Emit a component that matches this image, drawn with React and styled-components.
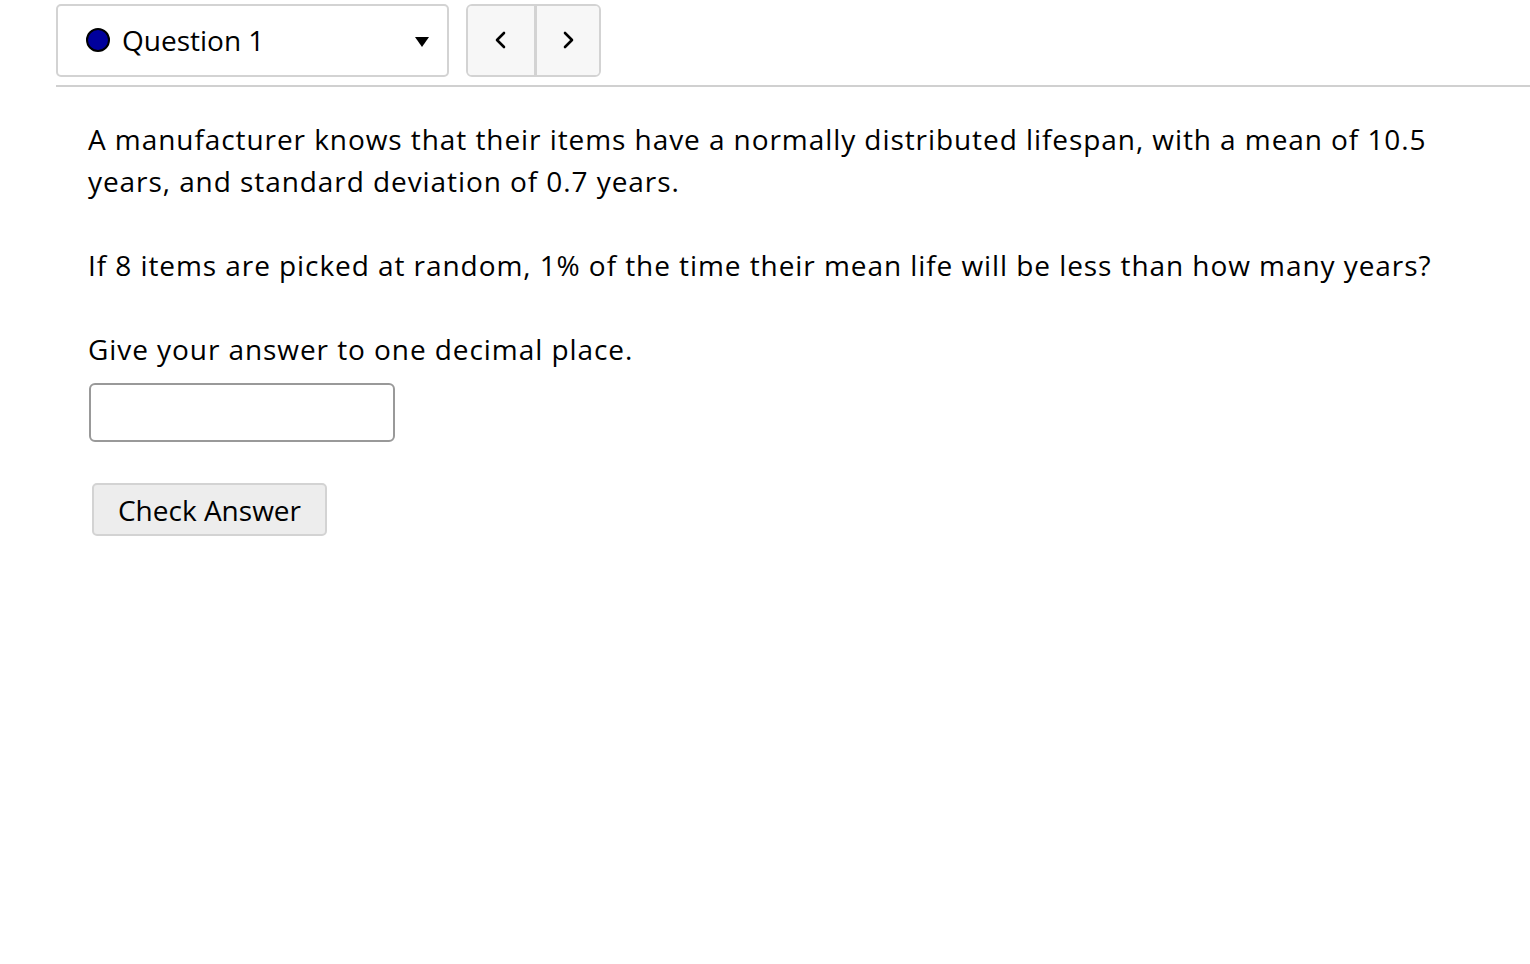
import React from "react";
import styled, { createGlobalStyle } from "styled-components";

const Global = createGlobalStyle`
  html, body { margin: 0; padding: 0; background: #fff; }
  body { font-family: "Open Sans", "Noto Sans", sans-serif; color: #000; }
`;

const Page = styled.div`
  padding: 4px 0 0 56px;
`;

const Toolbar = styled.div`
  display: flex;
  align-items: center;
  gap: 17px;
  padding-bottom: 8px;
  border-bottom: 2px solid #d0d0d0;
`;

const Select = styled.div`
  box-sizing: border-box;
  width: 393px;
  height: 73px;
  border: 2px solid #d3d3d3;
  border-radius: 5px;
  display: flex;
  align-items: center;
  padding: 0 18px 2px 28px;
  gap: 12px;
  font-size: 28px;
  background: #fff;
`;

const Dot = styled.span`
  width: 20px;
  height: 20px;
  border-radius: 50%;
  background: #00009c;
  border: 2px solid #000;
  flex: none;
`;

const Label = styled.span`
  flex: 1;
  line-height: 1;
`;

const Caret = styled.svg`
  width: 14px;
  height: 10px;
  margin-top: 4px;
`;

const Nav = styled.div`
  box-sizing: border-box;
  display: flex;
  height: 73px;
  border: 2px solid #d3d3d3;
  border-radius: 6px;
  overflow: hidden;
  background: #f7f7f7;
`;

const NavButton = styled.button`
  width: ${p => p.$w}px;
  border: none;
  background: #f7f7f7;
  display: flex;
  align-items: center;
  justify-content: center;
  padding: 0 0 2px 0;
  & + & { border-left: 3px solid #d3d3d3; }
`;

const Content = styled.div`
  padding: 31px 0 0 32px;
  font-size: 28px;
  line-height: 42px;
`;

const Para = styled.p`
  margin: 0 0 42px 0;
  letter-spacing: 0.93px;
  padding-right: 80px;
`;

const Answer = styled.input`
  display: block;
  box-sizing: border-box;
  width: 306px;
  height: 59px;
  margin: -29px 0 0 1px;
  border: 2px solid #999;
  border-radius: 6px;
  font-size: 28px;
  font-family: inherit;
  outline: none;
`;

const CheckButton = styled.button`
  box-sizing: border-box;
  margin: 41px 0 0 4px;
  width: 235px;
  height: 53px;
  border: 2px solid #d3d3d3;
  border-radius: 5px;
  background: #ededed;
  font-family: "Open Sans", sans-serif;
  font-size: 28px;
  color: #000;
  padding: 0;
`;

const Chevron = ({ dir }) => (
  <svg width="14" height="20" viewBox="0 0 14 20">
    <path
      d={dir === "left" ? "M10 3 L3 10 L10 17" : "M4 3 L11 10 L4 17"}
      fill="none"
      stroke="#000"
      strokeWidth="2.6"
      strokeLinecap="round"
      strokeLinejoin="round"
    />
  </svg>
);

export default function App() {
  return (
    <>
      <Global />
      <Page>
        <Toolbar>
          <Select>
            <Dot />
            <Label>Question 1</Label>
            <Caret viewBox="0 0 14 10">
              <path d="M0 0 H14 L7 10 Z" fill="#000" />
            </Caret>
          </Select>
          <Nav>
            <NavButton $w={66} aria-label="Previous">
              <Chevron dir="left" />
            </NavButton>
            <NavButton $w={65} aria-label="Next">
              <Chevron dir="right" />
            </NavButton>
          </Nav>
        </Toolbar>
        <Content>
          <Para>
            A manufacturer knows that their items have a normally distributed lifespan, with a mean of 10.5 years, and standard deviation of 0.7 years.
          </Para>
          <Para>
            If 8 items are picked at random, 1% of the time their mean life will be less than how many years?
          </Para>
          <Para>Give your answer to one decimal place.</Para>
          <Answer type="text" />
          <CheckButton>Check Answer</CheckButton>
        </Content>
      </Page>
    </>
  );
}
